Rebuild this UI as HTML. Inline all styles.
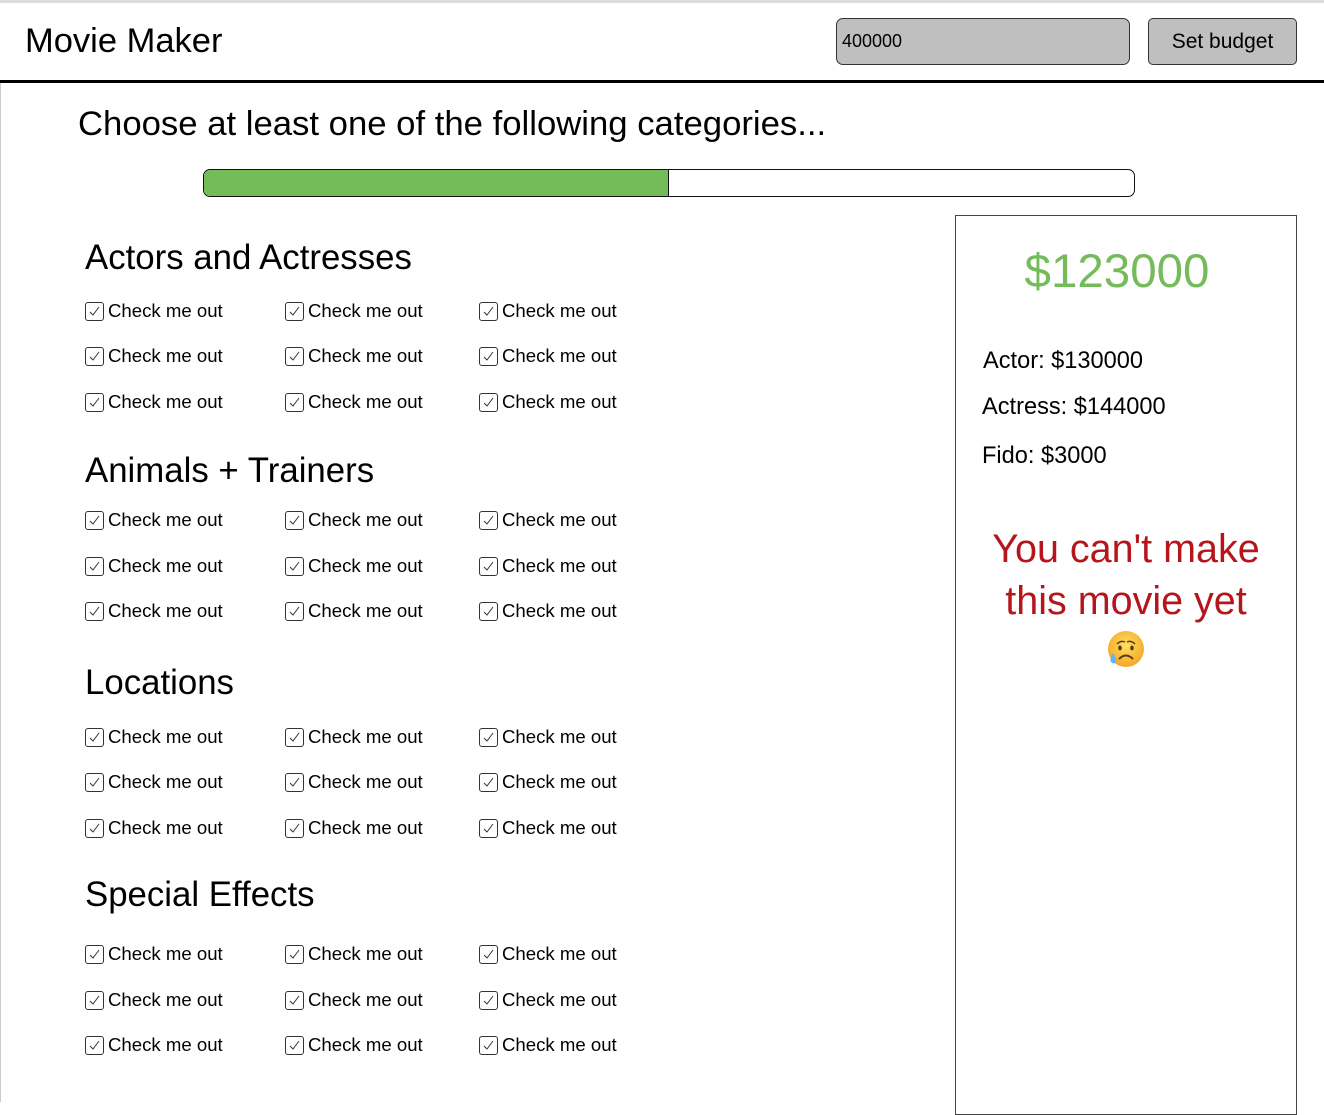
<!DOCTYPE html>
<html><head><meta charset="utf-8"><style>
*{margin:0;padding:0;box-sizing:border-box}
body{width:1324px;height:1102px;overflow:hidden;background:#fff;font-family:"Liberation Sans",Arial,sans-serif;color:#000;position:relative}
.a{position:absolute;white-space:nowrap}
.cb{position:absolute;width:19px;height:19px;border:1px solid #333;border-radius:3px}
.cb svg{position:absolute;left:3px;top:3px}
.lbl{position:absolute;font-size:18.6px;line-height:20px;white-space:nowrap}
h2{position:absolute;font-weight:normal;font-size:34.8px;line-height:36px;white-space:nowrap;left:85px}
</style></head><body>
<div class="a" style="left:0;top:0;width:1324px;height:3px;background:#ddd"></div>
<div class="a" style="left:25px;top:22px;font-size:34.5px;line-height:38px">Movie Maker</div>
<div class="a" style="left:836px;top:18px;width:294px;height:47px;background:#bfbfbf;border:1px solid #333;border-radius:7px;font-size:18px;line-height:45px;padding-left:5px">400000</div>
<div class="a" style="left:1148px;top:18px;width:149px;height:47px;background:#bfbfbf;border:1px solid #333;border-radius:5px;font-size:21px;line-height:45px;text-align:center">Set budget</div>
<div class="a" style="left:0;top:80px;width:1324px;height:3px;background:#000"></div>
<div class="a" style="left:0;top:83px;width:1px;height:1019px;background:#ccc"></div>
<div class="a" style="left:78px;top:105px;font-size:34.7px;line-height:38px">Choose at least one of the following categories...</div>
<div class="a" style="left:203px;top:169px;width:932px;height:28px;border:1.5px solid #111;border-radius:7px;overflow:hidden"><div style="width:465px;height:100%;background:#74bb5a;border-right:1.5px solid #111"></div></div>

<div class="a" style="left:955px;top:215px;width:342px;height:900px;border:1.5px solid #444"></div>
<div class="a" style="left:956px;width:322px;top:245px;font-size:47.5px;line-height:54px;text-align:center;color:#74bb5a">$123000</div>
<div class="a" style="left:983px;top:347px;font-size:23.6px;line-height:28px">Actor: $130000</div>
<div class="a" style="left:982px;top:393px;font-size:23.6px;line-height:28px">Actress: $144000</div>
<div class="a" style="left:982px;top:442px;font-size:23.6px;line-height:28px">Fido: $3000</div>
<div class="a" style="left:956px;width:340px;top:523px;font-size:39.5px;line-height:52px;text-align:center;color:#b5161b;white-space:normal">You can't make<br>this movie yet</div>
<svg class="a" style="left:1106px;top:629px" width="40" height="40" viewBox="0 0 40 40"><defs><radialGradient id="g" cx="50%" cy="40%" r="60%"><stop offset="0" stop-color="#ffe066"/><stop offset="1" stop-color="#f5a623"/></radialGradient></defs><circle cx="20" cy="20" r="18" fill="url(#g)"/><path d="M11 15 q4-4 8-2 M21 13 q4-2 8 2" stroke="#5a3b10" stroke-width="1.5" fill="none"/><ellipse cx="14" cy="19" rx="1.8" ry="2.5" fill="#5a3b10"/><ellipse cx="26" cy="19" rx="1.8" ry="2.5" fill="#5a3b10"/><path d="M13 30 q7-7 14 0" stroke="#5a3b10" stroke-width="2" fill="none"/><path d="M7 24 q-4 6 -2 9 q3 3 5 0 q1-3 -3-9z" fill="#5fb6f0"/></svg>

<h2 style="top:240px">Actors and Actresses</h2>
<h2 style="top:453px">Animals + Trainers</h2>
<h2 style="top:665px">Locations</h2>
<h2 style="top:877px">Special Effects</h2>

<div id="c"></div>
<script>
var rows=[311,356,402,520,566,611,737,782,828,954,1000,1045],cols=[85,285,479],h='';
rows.forEach(function(y){cols.forEach(function(x){
h+='<div class="cb" style="left:'+x+'px;top:'+(y-9)+'px"><svg width="11" height="11" viewBox="0 0 11 11"><path d="M1 6 L4 9 L10 1" stroke="#333" stroke-width="1" fill="none"/></svg></div>';
h+='<div class="lbl" style="left:'+(x+23)+'px;top:'+(y-10)+'px">Check me out</div>';
});});
document.getElementById('c').innerHTML=h;
</script>
</body></html>
